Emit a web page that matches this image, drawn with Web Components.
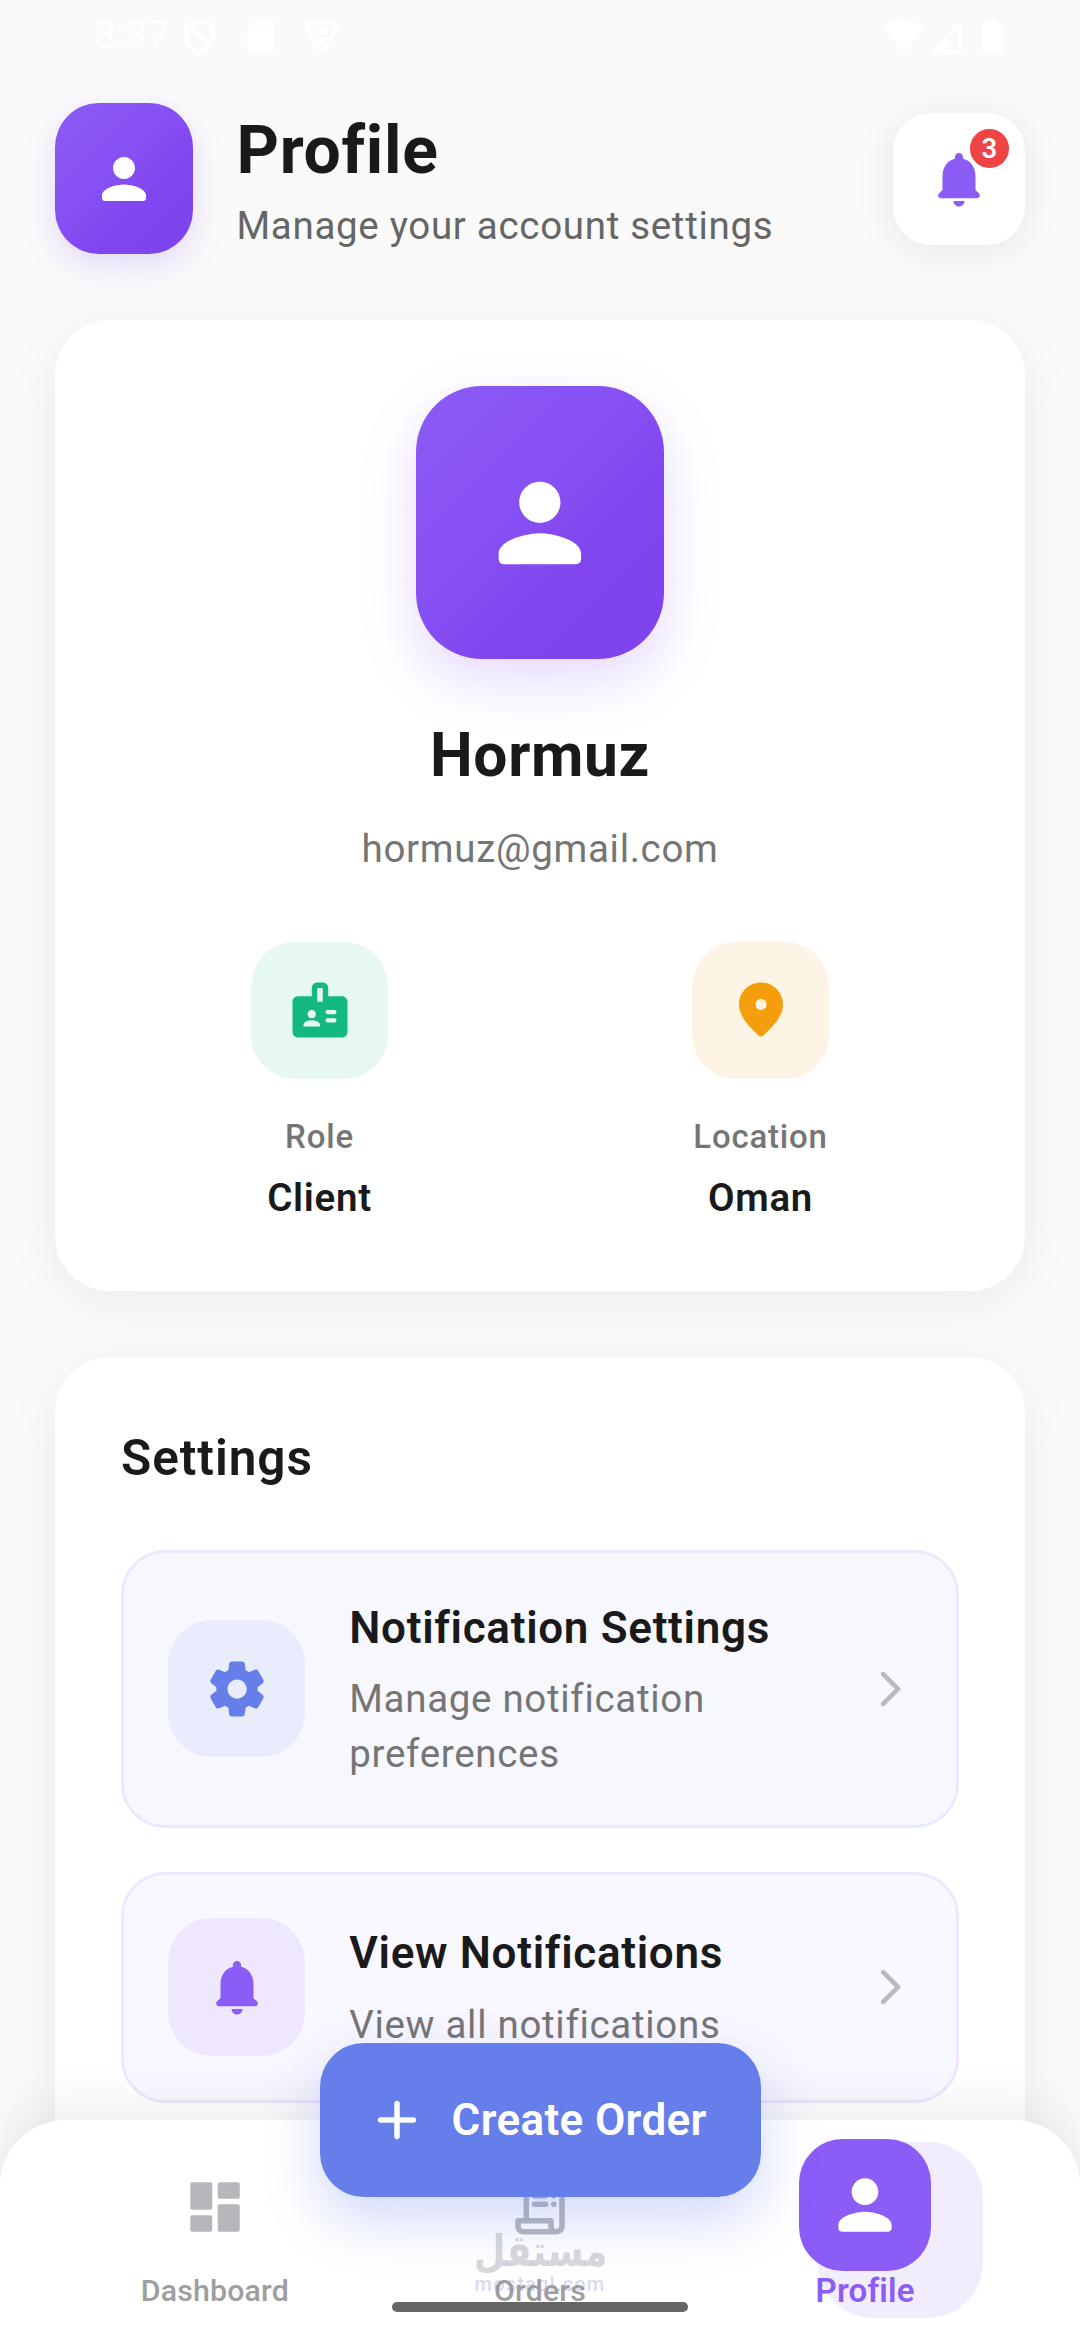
<!DOCTYPE html>
<html lang="en">
<head>
<meta charset="utf-8">
<title>Profile</title>
<style>
  html, body { margin: 0; height: 2340px; overflow: hidden; background: #fafafa; }
  body { font-family: Roboto, "Liberation Sans", sans-serif; color: #1a1a1a; }
</style>
</head>
<body>
<profile-screen></profile-screen>
<script>
const ICONS = {
  person: '<path d="M12 12c2.21 0 4-1.79 4-4s-1.79-4-4-4-4 1.79-4 4 1.79 4 4 4zm0 2c-2.67 0-8 1.34-8 4v1c0 .55.45 1 1 1h14c.55 0 1-.45 1-1v-1c0-2.66-5.33-4-8-4z"/>',
  bell: '<path d="M12 22c1.1 0 2-.9 2-2h-4c0 1.1.89 2 2 2zm6-6v-5c0-3.07-1.64-5.64-4.5-6.32V4c0-.83-.67-1.5-1.5-1.5s-1.5.67-1.5 1.5v.68C7.63 5.36 6 7.92 6 11v5l-1.29 1.29c-.63.63-.19 1.71.7 1.71h13.17c.89 0 1.34-1.08.71-1.71L18 16z"/>',
  badge: '<path fill-rule="evenodd" d="M20 7h-5V4c0-1.1-.9-2-2-2h-2c-1.1 0-2 .9-2 2v3H4c-1.1 0-2 .9-2 2v11c0 1.1.9 2 2 2h16c1.1 0 2-.9 2-2V9c0-1.100-.9-2-2-2zM9 12c.83 0 1.500.67 1.500 1.500S9.830 15 9 15s-1.500-.67-1.500-1.500S8.170 12 9 12zm3 6H6v-.43c0-.6.360-1.150.92-1.390C7.560 15.900 8.260 15.750 9 15.750s1.440.15 2.080.430c.55.240.92.780.92 1.390V18zm1-9h-2V4h2v5zm4.250 7.500h-2.500c-.41 0-.75-.34-.75-.75s.34-.75.75-.75h2.500c.41 0 .75.34.75.75s-.34.75-.75.75zm0-3h-2.500c-.41 0-.75-.34-.75-.75s.34-.75.75-.75h2.500c.41 0 .75.34.75.75s-.34.75-.75.75z"/>',
  pin: '<path fill-rule="evenodd" d="M12 2c-4.200 0-8 3.220-8 8.200 0 3.180 2.450 6.920 7.340 11.230.38.330.95.330 1.330 0C17.550 17.120 20 13.380 20 10.200 20 5.220 16.200 2 12 2zm0 10c-1.100 0-2-.9-2-2s.9-2 2-2 2 .9 2 2-.9 2-2 2z"/>',
  gear: '<path fill-rule="evenodd" d="M19.5 12c0-.23-.01-.45-.03-.68l1.86-1.41c.4-.3.51-.86.26-1.3l-1.87-3.23c-.25-.44-.79-.62-1.25-.42l-2.15.91c-.37-.26-.76-.49-1.17-.68l-.29-2.31C14.8 2.38 14.37 2 13.87 2h-3.73c-.51 0-.94.38-1 .88l-.29 2.31c-.41.19-.8.42-1.17.68l-2.15-.91c-.46-.2-1-.02-1.25.42L2.41 8.62c-.25.44-.14.99.26 1.3l1.86 1.41C4.51 11.55 4.5 11.77 4.5 12s.01.45.03.68l-1.86 1.41c-.4.3-.51.86-.26 1.3l1.87 3.23c.25.44.79.62 1.25.42l2.15-.91c.37.26.76.49 1.17.68l.29 2.31c.06.5.49.88.99.88h3.73c.5 0 .93-.38.99-.88l.29-2.31c.41-.19.8-.42 1.17-.68l2.15.91c.46.2 1 .02 1.25-.42l1.87-3.23c.25-.44.14-.99-.26-1.3l-1.86-1.41c.03-.23.04-.45.04-.68zm-7.46 3.5c-1.93 0-3.5-1.57-3.5-3.5s1.57-3.5 3.5-3.5 3.5 1.57 3.5 3.5-1.57 3.5-3.5 3.5z"/>',
  chevron: '<path d="M7.38 21.01c.49.49 1.28.49 1.77 0l8.31-8.31c.39-.39.39-1.02 0-1.41L9.15 2.98c-.49-.49-1.28-.49-1.77 0s-.49 1.28 0 1.77L14.62 12l-7.25 7.25c-.48.48-.48 1.28.01 1.76z"/>',
  plus: '<path d="M18 13h-5v5c0 .55-.45 1-1 1s-1-.45-1-1v-5H6c-.55 0-1-.45-1-1s.45-1 1-1h5V6c0-.55.45-1 1-1s1 .45 1 1v5h5c.55 0 1 .45 1 1s-.45 1-1 1z"/>',
  dashboard: '<rect x="3" y="3" width="8" height="10" rx=".7"/><rect x="3" y="15" width="8" height="6" rx=".7"/><rect x="13" y="3" width="8" height="6" rx=".7"/><rect x="13" y="11" width="8" height="10" rx=".7"/>',
  receipt: '<path fill-rule="evenodd" d="M19.500 3.500 18 2l-1.500 1.500L15 2l-1.500 1.500L12 2l-1.500 1.500L9 2 7.500 3.500 6 2v14H4c-.55 0-1 .45-1 1v2c0 1.660 1.340 3 3 3h12c1.660 0 3-1.340 3-3V2l-1.500 1.500zM15 20H6c-.55 0-1-.45-1-1v-1h10v2zm4-1c0 .55-.45 1-1 1s-1-.45-1-1v-2c0-.55-.45-1-1-1H8V5h11v14z"/><rect x="9" y="7" width="6" height="2" rx="1"/><rect x="16" y="7" width="2" height="2" rx="1"/><rect x="9" y="10" width="6" height="2" rx="1"/><rect x="16" y="10" width="2" height="2" rx="1"/>'
};

function define(name, html) {
  const template = document.createElement('template');
  template.innerHTML = html;
  customElements.define(name, class extends HTMLElement {
    constructor() {
      super();
      this.attachShadow({ mode: 'open' }).append(document.importNode(template.content, true));
    }
  });
}

customElements.define('ui-icon', class extends HTMLElement {
  connectedCallback() {
    if (this.shadowRoot) return;
    this.attachShadow({ mode: 'open' }).innerHTML = `
      <style>
        :host { display: block; flex: none; width: var(--size, 66px); height: var(--size, 66px); }
        svg { display: block; width: 100%; height: 100%; fill: currentColor; }
      </style>
      <svg viewBox="0 0 24 24">${ICONS[this.getAttribute('name')]}</svg>`;
  }
});

define('status-bar', `
  <style>
    :host { display: flex; justify-content: space-between; height: 72px; padding: 0 76px 0 94px; box-sizing: border-box; color: #fff; }
    div { display: flex; }
    .time { font-size: 40px; line-height: 71px; width: 88px; letter-spacing: -.3px; white-space: nowrap; }
    svg { display: block; height: 72px; }
  </style>
  <div>
    <span class="time">3:37</span>
    <svg width="170" height="72" viewBox="182 0 170 72" fill="none" stroke="#fff" stroke-width="4">
      <path d="M199.500 20.500 186.500 25.500V36c0 8 5.500 14 13 17 7.500-3 13-9 13-17V25.500z" stroke-linejoin="round"/>
      <path d="M194 23c-1 8 2 9 6 13 4 3 6 5 6 10" stroke-width="3.500"/>
      <path d="M257 19h13a4 4 0 0 1 4 4v26a4 4 0 0 1-4 4h-19a4 4 0 0 1-4-4V29z" fill="#fff" stroke="none"/>
      <path d="M258 23v7M264 23v7M270 23v7" stroke="#fafafa" stroke-width="2"/>
      <path d="M309 23h26q3 1 1 5l-12 22q-2.500 3-5 0L307 28q-1-4 2-5z" stroke-width="3.500"/>
      <path d="M318 28h8l2.500 6h-13zM315 37h13l-6.500 9z" fill="#fff" stroke="none"/>
    </svg>
  </div>
  <svg width="122" height="72" viewBox="882 0 122 72" fill="#fff">
    <path d="M883 28q20.500-17 41 0L903.500 53z"/>
    <path fill-rule="evenodd" d="M928 53.500 961.500 20v33.500zM948 37v13.500h10V27z"/>
    <path d="M985 22h3v-3h9v3h3a3 3 0 0 1 3 3v25a3 3 0 0 1-3 3h-15a3 3 0 0 1-3-3V25a3 3 0 0 1 3-3z"/>
  </svg>`);

define('gradient-avatar', `
  <style>
    :host { display: flex; flex: none; align-items: center; justify-content: center; box-sizing: border-box;
      width: var(--w); height: var(--h); border-radius: var(--r); color: #fff;
      background: linear-gradient(135deg, #8b5cf6 0%, #864ff3 45%, #8045ee 68%, #7f43ee 100%); }
  </style>
  <slot></slot>`);

define('app-header', `
  <style>
    :host { display: flex; align-items: center; height: 151.250px; margin: 31px 55px 0; }
    gradient-avatar { --w: 137.500px; --h: 151.250px; --r: 44px; box-shadow: 0 11px 33px rgba(139,92,246,.2); }
    .titles { flex: 1; margin-left: 44px; padding-top: 6px; }
    .title { font-size: 66px; line-height: 79px; font-weight: 700; letter-spacing: .69px; }
    .sub { font-size: 38.500px; line-height: 55px; margin-top: 8px; color: #666; letter-spacing: .69px; white-space: nowrap; }
    .bell { position: relative; display: flex; align-items: center; justify-content: center; width: 132px; height: 132px;
      border-radius: 38.500px; background: #fff; color: #8b5cf6; box-shadow: 0 5.500px 41px rgba(0,0,0,.08); }
    .count { position: absolute; right: 16.500px; top: 16.500px; width: 38.500px; height: 38.500px; border-radius: 50%;
      background: #ef4444; color: #fff; font-size: 27.500px; line-height: 39px; font-weight: 600; text-align: center; }
  </style>
  <gradient-avatar><ui-icon name="person"></ui-icon></gradient-avatar>
  <div class="titles">
    <div class="title">Profile</div>
    <div class="sub">Manage your account settings</div>
  </div>
  <div class="bell"><ui-icon name="bell"></ui-icon><span class="count">3</span></div>`);

define('surface-card', `
  <style>
    :host { display: block; box-sizing: border-box; margin: 66px 55px 0; padding: 66px; border-radius: 55px; background: #fff;
      box-shadow: 0 11px 55px rgba(0,0,0,.06); }
  </style>
  <slot></slot>`);

define('stat-item', `
  <style>
    :host { display: flex; flex: 1 1 0; flex-direction: column; align-items: center; }
    .tile { display: flex; align-items: center; justify-content: center; width: 137.500px; height: 137.500px; border-radius: 44px;
      background: var(--tint); color: var(--tone); }
    .label { margin-top: 33px; font-size: 33px; line-height: 50px; font-weight: 500; color: #757575; letter-spacing: .8px; }
    .value { margin-top: 8px; font-size: 38.500px; line-height: 55px; font-weight: 600; letter-spacing: .72px; }
  </style>
  <div class="tile"><slot name="icon"></slot></div>
  <div class="label"><slot name="label"></slot></div>
  <div class="value"><slot></slot></div>`);

define('profile-summary', `
  <style>
    :host { display: flex; flex-direction: column; align-items: center; height: 838.500px; }
    gradient-avatar { --w: 247.500px; --h: 272.250px; --r: 66px; box-shadow: 0 22px 55px rgba(139,92,246,.22); }
    .name { margin-top: 55px; font-size: 60.500px; line-height: 84px; font-weight: 700; letter-spacing: .65px; }
    .mail { margin-top: 23px; font-size: 38.500px; line-height: 55px; color: #757575; letter-spacing: .69px; }
    .stats { display: flex; gap: 44px; width: 100%; margin-top: 66px; }
  </style>
  <gradient-avatar><ui-icon name="person" style="--size:123.750px"></ui-icon></gradient-avatar>
  <div class="name">Hormuz</div>
  <div class="mail">hormuz@gmail.com</div>
  <div class="stats">
    <stat-item style="--tint:#e7f8f2;--tone:#14b981"><ui-icon slot="icon" name="badge"></ui-icon><span slot="label">Role</span>Client</stat-item>
    <stat-item style="--tint:#fef4e6;--tone:#f59e0b"><ui-icon slot="icon" name="pin"></ui-icon><span slot="label">Location</span>Oman</stat-item>
  </div>`);

define('setting-row', `
  <style>
    :host { display: flex; align-items: center; box-sizing: border-box; padding: 43.750px; border: 3px solid var(--line);
      border-radius: 44px; background: var(--bg); }
    .tile { display: flex; flex: none; align-items: center; justify-content: center; width: 137.500px; height: 137.500px;
      border-radius: 44px; background: var(--tint); color: var(--tone); }
    .text { flex: 1; margin: 0 44px; }
    .title { font-size: 44px; line-height: 63.250px; font-weight: 600; letter-spacing: .69px; white-space: nowrap; }
    .sub { margin-top: 11px; font-size: 38.500px; line-height: 55px; color: #757575; letter-spacing: .69px; }
    .go { --size: 44px; color: #b8babe; }
  </style>
  <div class="tile"><slot name="icon"></slot></div>
  <div class="text"><div class="title"><slot name="title"></slot></div><div class="sub"><slot></slot></div></div>
  <ui-icon class="go" name="chevron"></ui-icon>`);

define('settings-list', `
  <style>
    :host { display: flex; flex-direction: column; gap: 44px; height: 900px; }
    .heading { font-size: 49.500px; line-height: 70px; margin-bottom: 13px; font-weight: 600; letter-spacing: .95px; }
  </style>
  <div class="heading">Settings</div>
  <setting-row style="--bg:#f7f8fe;--line:#e8ebfd;--tint:#e8ecfd;--tone:#667eea">
    <ui-icon slot="icon" name="gear"></ui-icon><span slot="title">Notification Settings</span>Manage notification preferences
  </setting-row>
  <setting-row style="--bg:#f9f7ff;--line:#eee7fe;--tint:#eee7fe;--tone:#8b5cf6">
    <ui-icon slot="icon" name="bell"></ui-icon><span slot="title">View Notifications</span>View all notifications
  </setting-row>`);

define('nav-item', `
  <style>
    :host { display: flex; flex: 1 1 0; flex-direction: column; align-items: center; position: relative; color: #b5b7bb; }
    .icon { display: flex; align-items: center; justify-content: center; width: 132px; height: 132px; margin-top: 21px; border-radius: 44px; }
    .label { font-size: 30.250px; line-height: 40px; margin-top: -2px; font-weight: 500; color: #9e9e9e; letter-spacing: .2px; }
    :host([active]) .icon { position: relative; margin-top: 19px; background: #8b5cf6; color: #fff; --size: 80px; }
    :host([active]) .label { position: relative; margin-top: 0; font-size: 33px; font-weight: 600; color: #8b5cf6; }
    .halo { display: none; }
    :host([active]) .halo { display: block; position: absolute; left: 115px; top: 21.750px; width: 165px; height: 176px; border-radius: 55px; background: #f1edfd; }
  </style>
  <div class="halo"></div>
  <div class="icon"><slot name="icon"></slot></div>
  <div class="label"><slot></slot></div>`);

define('bottom-nav', `
  <style>
    :host { position: absolute; left: 0; right: 0; bottom: 0; display: flex; box-sizing: border-box; height: 219.750px; padding: 0 52.250px;
      border-radius: 66px 66px 0 0; background: #fff; box-shadow: 0 -11px 55px rgba(0,0,0,.08); }
  </style>
  <nav-item><ui-icon slot="icon" name="dashboard"></ui-icon>Dashboard</nav-item>
  <nav-item><ui-icon slot="icon" name="receipt"></ui-icon>Orders</nav-item>
  <nav-item active><ui-icon slot="icon" name="person"></ui-icon>Profile</nav-item>`);

define('create-button', `
  <style>
    :host { position: absolute; left: 319.500px; top: 2043px; display: flex; align-items: center; gap: 22px; box-sizing: border-box;
      width: 441px; height: 154px; padding-left: 44px; border-radius: 44px; background: #667eea; color: #fff;
      font-size: 44px; font-weight: 600; letter-spacing: .36px; white-space: nowrap; box-shadow: 0 22px 55px rgba(102,126,234,.3); }
  </style>
  <ui-icon name="plus"></ui-icon><span><slot></slot></span>`);

define('site-mark', `
  <style>
    :host { position: absolute; left: 475px; top: 2226px; width: 130px; display: flex; flex-direction: column; align-items: center;
      white-space: nowrap; }
    .ar { font: 700 44px/50px "DejaVu Sans", sans-serif; height: 48px; transform: scaleX(.83); color: rgba(140,140,155,.36); }
    .en { font: 500 20px/20px Roboto, sans-serif; letter-spacing: 1.200px; color: rgba(150,140,205,.34); }
  </style>
  <div class="ar" lang="ar" dir="rtl">مستقل</div>
  <div class="en">mostaql.com</div>`);

define('home-indicator', `
  <style>:host { position: absolute; left: 392px; bottom: 28px; width: 296px; height: 10px; border-radius: 5px; background: #666; }</style>`);

define('profile-screen', `
  <style>:host { display: block; position: relative; width: 1080px; height: 2340px; overflow: hidden; background: #fafafa; }</style>
  <status-bar></status-bar>
  <app-header></app-header>
  <surface-card><profile-summary></profile-summary></surface-card>
  <surface-card><settings-list></settings-list></surface-card>
  <bottom-nav></bottom-nav>
  <create-button>Create Order</create-button>
  <site-mark></site-mark>
  <home-indicator></home-indicator>`);
</script>
</body>
</html>
